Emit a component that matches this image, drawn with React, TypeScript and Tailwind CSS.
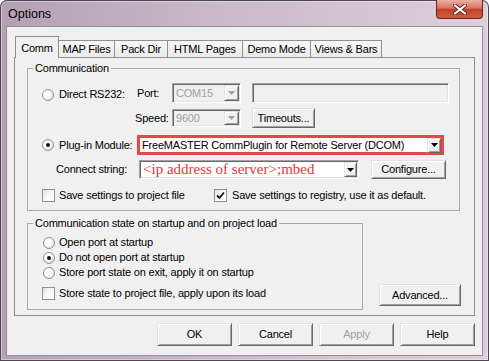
import type { ReactNode } from "react";

const raised =
  "bg-[#f0f0f0] border border-t-[#e3e3e3] border-l-[#e3e3e3] border-r-[#696969] border-b-[#696969] shadow-[inset_1px_1px_0_#ffffff,inset_-1px_-1px_0_#a0a0a0]";
const sunken =
  "border border-t-[#a0a0a0] border-l-[#a0a0a0] border-r-white border-b-white shadow-[inset_1px_1px_0_#696969,inset_-1px_-1px_0_#e3e3e3]";

function Radio({ checked }: { checked?: boolean }) {
  return (
    <span className="w-[12px] h-[12px] shrink-0 rounded-full border border-[#8f8f8f] bg-[radial-gradient(circle_at_35%_35%,#ffffff_30%,#d4d4d4)] flex items-center justify-center">
      {checked && <span className="w-[4px] h-[4px] rounded-full bg-[#151515]" />}
    </span>
  );
}

function Check({ checked }: { checked?: boolean }) {
  return (
    <span className="w-[13px] h-[13px] shrink-0 border border-[#8e8f8f] bg-[linear-gradient(135deg,#e2e2e2,#ffffff_70%)] flex items-center justify-center">
      {checked && (
        <svg width="11" height="11" viewBox="0 0 11 11">
          <path d="M2 5.5 L4.5 8 L9 2.5" fill="none" stroke="#111" strokeWidth="1.8" />
        </svg>
      )}
    </span>
  );
}

function Arrow({ disabled }: { disabled?: boolean }) {
  return (
    <svg width="7" height="4" viewBox="0 0 7 4">
      <polygon points="0,0 7,0 3.5,4" fill={disabled ? "#a0a0a0" : "#000"} />
    </svg>
  );
}

function DropButton({ disabled, w = "w-[15px]" }: { disabled?: boolean; w?: string }) {
  return (
    <span className={`${w} h-full shrink-0 flex items-center justify-center ${raised}`}>
      <Arrow disabled={disabled} />
    </span>
  );
}

function Btn({ children, className = "", disabled }: { children: ReactNode; className?: string; disabled?: boolean }) {
  return (
    <button className={`${raised} flex items-center justify-center ${disabled ? "text-[#a0a0a0]" : "text-black"} ${className}`}>
      {children}
    </button>
  );
}

function Group({ label, className = "", children }: { label: string; className?: string; children: ReactNode }) {
  return (
    <fieldset className={`border border-[#a8a8a8] ${className}`}>
      <legend className="ml-[5px] px-[2px] text-[11px] leading-[13px]">{label}</legend>
      {children}
    </fieldset>
  );
}

const tabs = [
  { label: "Comm", w: "w-[44px]" },
  { label: "MAP Files", w: "w-[57px]" },
  { label: "Pack Dir", w: "w-[54px]" },
  { label: "HTML Pages", w: "w-[76px]" },
  { label: "Demo Mode", w: "w-[69px]" },
  { label: "Views & Bars", w: "w-[72px]" },
];

export default function App() {
  return (
    <div className="w-[489px] h-[361px] flex flex-col rounded-t-[7px] overflow-hidden bg-[linear-gradient(90deg,#b3a0b2_0%,#c6b4c5_35%,#d3c4d2_70%,#dccfdb_100%)] shadow-[inset_0_0_0_1px_#4f4750,inset_0_0_0_2px_rgba(255,255,255,0.4)] font-['Liberation_Sans',Arial,sans-serif] text-[11px] tracking-[-0.2px] text-black">
      {/* Title bar */}
      <div className="h-[27px] shrink-0 flex justify-between items-start">
        <span className="pl-[8px] pt-[6px] text-[12.5px] leading-[16px] tracking-normal">Options</span>
        <div className="mr-[6px] w-[47px] h-[19px] rounded-b-[4px] border border-t-0 border-[#5c2a26] bg-[linear-gradient(180deg,#eab0a6_0%,#d9735f_45%,#c2402a_52%,#cf5d42_100%)] flex items-center justify-center">
          <svg width="14" height="11" viewBox="0 0 14 11">
            <path d="M2 1.5 L12 9.5 M12 1.5 L2 9.5" stroke="#5a2a24" strokeWidth="4" strokeLinecap="round" />
            <path d="M2 1.5 L12 9.5 M12 1.5 L2 9.5" stroke="#ffffff" strokeWidth="2.2" strokeLinecap="round" />
          </svg>
        </div>
      </div>

      {/* Client area */}
      <div className="mx-[7px] h-[328px] shrink-0 bg-[#f0f0f0] shadow-[0_0_0_1px_#9a8b9a] pt-[9px]">
        {/* Tabs */}
        <div className="relative z-10 flex items-end h-[22px] ml-[8px] -mb-px">
          {tabs.map((t, i) =>
            i === 0 ? (
              <div
                key={t.label}
                className={`${t.w} h-[22px] bg-[#f0f0f0] border border-b-0 border-[#8e8f8f] flex items-center justify-center pt-[1px]`}
              >
                {t.label}
              </div>
            ) : (
              <div
                key={t.label}
                className={`${t.w} h-[17px] mb-px -ml-px bg-[linear-gradient(180deg,#f6f6f6,#ebebeb)] border border-b-0 border-[#8e8f8f] flex items-center justify-center`}
              >
                {t.label}
              </div>
            )
          )}
        </div>

        {/* Tab panel */}
        <div className="mx-[7px] h-[259px] border border-[#8e8f8f] bg-[#f0f0f0] pl-[12px]">
          <Group label="Communication" className="mt-[4px] w-[433px] pb-[8px]">
            {/* Direct RS232 */}
            <div className="mt-[8px] flex items-center h-[20px] pl-[14px]">
              <div className="flex items-center pt-[3px]">
                <Radio />
                <span className="ml-[5px] w-[78px]">Direct RS232:</span>
              </div>
              <span className="w-[35px]">Port:</span>
              <div className={`w-[69px] h-[20px] flex bg-[#f0f0f0] ${sunken} p-[1px]`}>
                <span className="flex-1 pl-[2px] text-[#a0a0a0] leading-[16px]">COM15</span>
                <DropButton disabled />
              </div>
              <div className={`ml-[11px] w-[197px] h-[20px] bg-[#f0f0f0] ${sunken}`} />
            </div>

            {/* Speed */}
            <div className="mt-[5px] flex items-center h-[20px] pl-[107px]">
              <span className="w-[37px]">Speed:</span>
              <div className={`w-[69px] h-[18px] flex bg-[#f0f0f0] ${sunken} p-[1px]`}>
                <span className="flex-1 pl-[2px] text-[#a0a0a0] leading-[14px]">9600</span>
                <DropButton disabled />
              </div>
              <Btn className="ml-[11px] w-[63px] h-[20px]">Timeouts...</Btn>
            </div>

            {/* Plug-in module */}
            <div className="mt-[7px] flex items-center h-[20px] pl-[14px]">
              <Radio checked />
              <span className="ml-[5px] w-[78px]">Plug-in Module:</span>
              <div className="w-[307px] h-[20px] border-[3px] border-[#e24a4a] bg-white flex items-center">
                <span className="flex-1 pl-[2px] whitespace-nowrap overflow-hidden">
                  FreeMASTER CommPlugin for Remote Server (DCOM)
                </span>
                <span className="h-[15px] flex">
                  <DropButton w="w-[14px]" />
                </span>
              </div>
            </div>

            {/* Connect string */}
            <div className="mt-[5px] flex items-center h-[19px] pl-[28px]">
              <span className="w-[83px]">Connect string:</span>
              <div className={`w-[220px] h-[19px] flex bg-white ${sunken} p-[1px]`}>
                <span className="flex-1 pl-[2px] font-['Liberation_Serif','Times_New_Roman',serif] text-[15px] leading-[15px] tracking-normal text-[#ea3434] whitespace-nowrap overflow-hidden">
                  &lt;ip address of server&gt;;mbed
                </span>
                <DropButton w="w-[13px]" />
              </div>
              <Btn className="ml-[12px] w-[75px] h-[19px]">Configure...</Btn>
            </div>

            {/* Save checkboxes */}
            <div className="mt-[10px] flex items-center h-[13px] pl-[14px]">
              <Check />
              <span className="ml-[4px] w-[155px]">Save settings to project file</span>
              <Check checked />
              <span className="ml-[5px]">Save settings to registry, use it as default.</span>
            </div>
          </Group>

          <div className="mt-[6px] flex items-end">
            <Group label="Communication state on startup and on project load" className="w-[336px] pb-[9px]">
              <div className="mt-[5px] flex flex-col">
                {[
                  { label: "Open port at startup", checked: false },
                  { label: "Do not open port at startup", checked: true },
                  { label: "Store port state on exit, apply it on startup", checked: false },
                ].map((r) => (
                  <div key={r.label} className="flex items-center h-[15px] pl-[15px]">
                    <Radio checked={r.checked} />
                    <span className="ml-[4px]">{r.label}</span>
                  </div>
                ))}
              </div>
              <div className="mt-[6px] flex items-center h-[14px] pl-[14px]">
                <Check />
                <span className="ml-[4px]">Store state to project file, apply upon its load</span>
              </div>
            </Group>
            <Btn className="ml-[16px] mb-[4px] w-[82px] h-[22px]">Advanced...</Btn>
          </div>
        </div>

        {/* Dialog buttons */}
        <div className="mt-[7px] flex justify-end gap-[6px] pr-[7px]">
          <Btn className="w-[75px] h-[23px]">OK</Btn>
          <Btn className="w-[75px] h-[23px]">Cancel</Btn>
          <Btn className="w-[75px] h-[23px]" disabled>
            Apply
          </Btn>
          <Btn className="w-[75px] h-[23px]">Help</Btn>
        </div>
      </div>
    </div>
  );
}
